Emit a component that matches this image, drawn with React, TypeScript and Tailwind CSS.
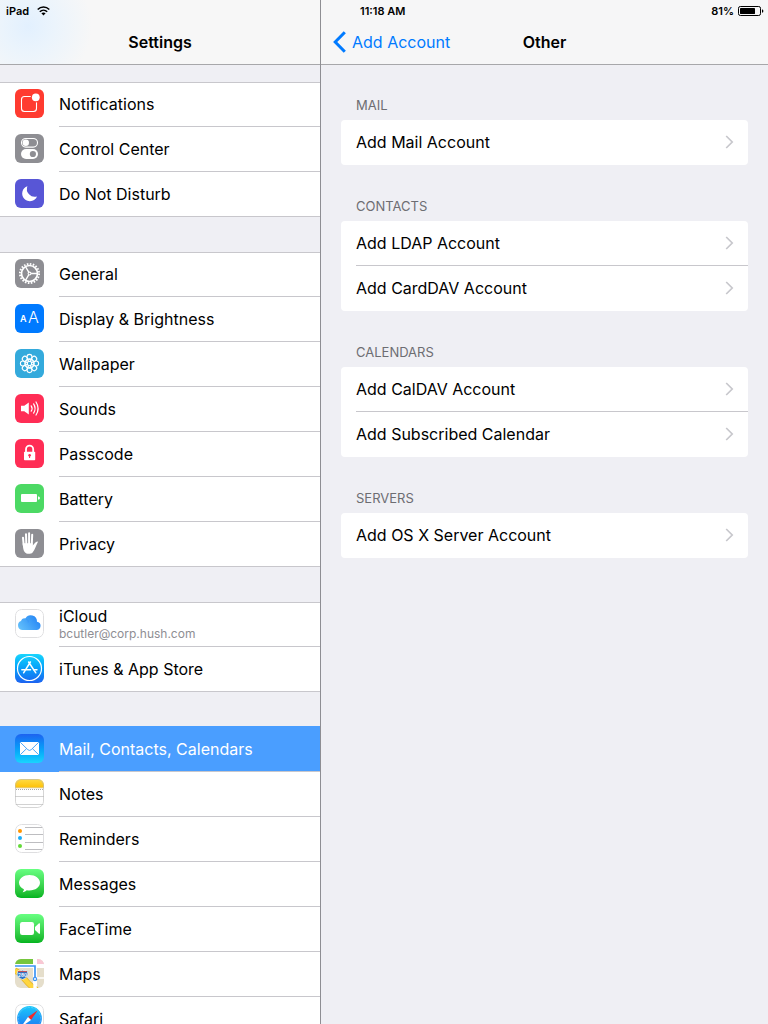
import type { ReactNode } from "react";

function Tile({ children, className }: { children: ReactNode; className: string }) {
  return (
    <svg viewBox="0 0 29 29" aria-hidden="true" className={`size-[29px] shrink-0 rounded-md ${className}`}>
      {children}
    </svg>
  );
}

const NotificationsIcon = () => (
  <Tile className="bg-[#ff3b30]">
    <rect x="6.5" y="7.5" width="15" height="15" rx="3" fill="none" stroke="#fff" strokeWidth="1.1" />
    <circle cx="20.8" cy="8.3" r="5.2" fill="#ff3b30" />
    <circle cx="20.8" cy="8.3" r="3.9" fill="#fff" />
  </Tile>
);

const ControlCenterIcon = () => (
  <Tile className="bg-[#8e8e93]">
    <rect x="6.5" y="4.5" width="16" height="8.6" rx="4.3" fill="none" stroke="#fff" strokeWidth="1.1" />
    <circle cx="10.8" cy="8.8" r="3.2" fill="#fff" />
    <rect x="6" y="15" width="17" height="10" rx="5" fill="#fff" />
    <circle cx="17.9" cy="20" r="3.1" fill="#8e8e93" />
  </Tile>
);

const MoonIcon = () => (
  <Tile className="bg-[#5856d6]">
    <path d="M12.4 7.2A7.7 7.7 0 1 0 22 17.4A7.8 7.8 0 0 1 12.4 7.2Z" fill="#fff" />
  </Tile>
);

const GearIcon = () => (
  <Tile className="bg-[#8e8e93]">
    <g fill="none" stroke="#fff">
      <circle cx="14.5" cy="14.5" r="9.6" strokeWidth="1.9" strokeDasharray="1.6 1.416" />
      <circle cx="14.5" cy="14.5" r="8" strokeWidth="1.7" />
      <circle cx="14.5" cy="14.5" r="1.4" strokeWidth="1.1" />
      <path d="M16 14.5H22M13.7 13.2L10.7 8M13.7 15.8L10.7 21" strokeWidth="1.4" />
    </g>
  </Tile>
);

const DisplayIcon = () => (
  <Tile className="bg-[#007aff]">
    <g fill="#fff" fontFamily="Inter, sans-serif">
      <text x="5" y="18" fontSize="9" fontWeight="600">A</text>
      <text x="13" y="19" fontSize="16" fontWeight="300">A</text>
    </g>
  </Tile>
);

const petals = [0, 45, 90, 135, 180, 225, 270, 315];

const WallpaperIcon = () => (
  <Tile className="bg-[#34aadc]">
    <g fill="none" stroke="#fff" strokeWidth="1.1">
      {petals.map((a) => (
        <g key={a} transform={`rotate(${a} 14.5 14.5)`}>
          <circle cx="14.5" cy="7.9" r="2.5" />
          <circle cx="14.5" cy="11" r="1.5" strokeWidth="0.8" />
        </g>
      ))}
      <circle cx="14.5" cy="14.5" r="2.2" />
    </g>
  </Tile>
);

const SoundsIcon = () => (
  <Tile className="bg-[#ff2d55]">
    <path d="M6 11.8H9.3L13.8 8.5V20.5L9.3 17.2H6Z" fill="#fff" />
    <g fill="none" stroke="#fff" strokeWidth="1.2" strokeLinecap="round">
      <path d="M16.2 11.8Q18 14.5 16.2 17.2" />
      <path d="M18.6 9.9Q21.6 14.5 18.6 19.1" />
      <path d="M21 8Q25.2 14.5 21 21" />
    </g>
  </Tile>
);

const LockIcon = () => (
  <Tile className="bg-[#ff2d55]">
    <path d="M11 13V10.2A3.6 3.6 0 0 1 18.2 10.2V13" fill="none" stroke="#fff" strokeWidth="1.8" />
    <rect x="9" y="12.7" width="11.2" height="8.6" rx="0.8" fill="#fff" />
    <circle cx="14.6" cy="16.2" r="1.3" fill="#ff2d55" />
    <path d="M14.6 16V19" stroke="#ff2d55" strokeWidth="1" />
  </Tile>
);

const BatteryIcon = () => (
  <Tile className="bg-[#4cd964]">
    <rect x="6" y="10" width="16" height="8" rx="1" fill="#fff" />
    <path d="M23 12.2Q25 12.6 25 14T23 15.8Z" fill="#fff" />
  </Tile>
);

const HandIcon = () => (
  <Tile className="bg-[#8e8e93]">
    <g fill="none" stroke="#fff" strokeWidth="2" strokeLinecap="round">
      <path d="M8 8.7L8.7 16M11 5.2L11.3 15M14.1 4.2V15M17.2 5.7L16.8 15" />
    </g>
    <path
      d="M7.7 14.2H17.8V16.6C19.2 14.5 20.5 12.6 22.3 12.4C23 12.4 23 13 22.5 13.8C20.8 16.8 20 20.8 17.6 23.4C15.8 25.4 11.3 25.4 9.6 23C8.1 20.9 7.9 17.2 7.7 14.2Z"
      fill="#fff"
    />
  </Tile>
);

const CloudIcon = () => (
  <Tile className="bg-white">
    <defs>
      <linearGradient id="cloud" x1="0" x2="1" y1="0.8" y2="0.3">
        <stop offset="0" stopColor="#63c0fb" />
        <stop offset="1" stopColor="#2485f5" />
      </linearGradient>
    </defs>
    <rect x="0.5" y="0.5" width="28" height="28" rx="6" fill="none" stroke="#dedee0" />
    <path
      d="M7.6 21A4.6 4.6 0 0 1 6 12.1A3.6 3.6 0 0 1 10.4 9.5A6.2 6.2 0 0 1 22 12.7A4.2 4.2 0 0 1 22 21Z"
      fill="url(#cloud)"
    />
    <path d="M10.4 9.5C12.8 10.2 13.4 12 13.2 13.5" fill="none" stroke="#338ff0" strokeWidth="0.5" />
  </Tile>
);

const AppStoreIcon = () => (
  <Tile className="bg-linear-to-b from-[#1ad5fd] to-[#1d62f0]">
    <g fill="none" stroke="#fff" strokeLinecap="round">
      <circle cx="14.5" cy="14.5" r="12" strokeWidth="1.2" />
      <path d="M13.6 8L20.8 18.8M15.4 8L8.6 18.8" strokeWidth="1.5" />
      <path d="M6.8 15.8H15.6M18.8 15.8H22" strokeWidth="1.4" />
    </g>
  </Tile>
);

const MailIcon = () => (
  <Tile className="bg-linear-to-b from-[#1d62f0] to-[#1ad5fd]">
    <rect x="5" y="8" width="19" height="13" rx="1.2" fill="#fff" />
    <path
      d="M5.4 8.4L12.8 15.7Q14.5 17.2 16.2 15.7L23.6 8.4M5.4 20.6L11.6 14.6M23.6 20.6L17.4 14.6"
      fill="none"
      stroke="#3a9df7"
      strokeWidth="0.9"
    />
  </Tile>
);

const NotesIcon = () => (
  <Tile className="bg-white">
    <defs>
      <linearGradient id="notes" x1="0" x2="0" y1="0" y2="1">
        <stop offset="0" stopColor="#ffdc45" />
        <stop offset="1" stopColor="#fec107" />
      </linearGradient>
    </defs>
    <path d="M0 0H29V8.6H0Z" fill="url(#notes)" />
    <path d="M0 8.8H29" stroke="#c9a227" strokeWidth="0.5" />
    <path d="M1 10.5H28" stroke="#a8a8a8" strokeDasharray="1 1" />
    <path d="M0 17.5H29M0 25.5H29" stroke="#d2d2d2" />
    <rect x="0.5" y="0.5" width="28" height="28" rx="6" fill="none" stroke="#b9b9b9" strokeOpacity="0.6" />
  </Tile>
);

const RemindersIcon = () => (
  <Tile className="bg-white">
    <path d="M10 3.5H28M10 10.5H28M10 18.5H28M10 25.5H27" stroke="#bdbdc0" />
    <circle cx="5" cy="7" r="2" fill="#ff9500" />
    <circle cx="5" cy="14" r="2" fill="#1badf8" />
    <circle cx="5" cy="22" r="2" fill="#63da38" />
    <rect x="0.5" y="0.5" width="28" height="28" rx="6" fill="none" stroke="#dedee0" />
  </Tile>
);

const MessagesIcon = () => (
  <Tile className="bg-linear-to-b from-[#67ff81] to-[#01b41f]">
    <path
      d="M14.5 6C20.3 6 25 9.4 25 13.8S20.3 21.5 14.5 21.5C13.5 21.5 12.6 21.4 11.7 21.2C10.8 22.3 9.3 23.1 7.6 23.2C8.5 22.3 8.9 21.3 8.9 20.3C5.9 18.9 4 16.5 4 13.8C4 9.4 8.7 6 14.5 6Z"
      fill="#fff"
    />
  </Tile>
);

const FaceTimeIcon = () => (
  <Tile className="bg-linear-to-b from-[#67ff81] to-[#01b41f]">
    <rect x="5" y="8" width="14" height="13" rx="2.2" fill="#fff" />
    <path d="M20 13L24 9.3Q25 8.8 25 10V19Q25 20.2 24 19.7L20 16Z" fill="#fff" />
  </Tile>
);

const MapsIcon = () => (
  <Tile className="bg-[#e5decb]">
    <path d="M0 0H18V5H0Z" fill="#76c63e" />
    <path d="M22 0H29V5H22Z" fill="#f9c7d4" />
    <path d="M0 5H29V9H0Z" fill="#fff" />
    <path d="M18 0H22V29H18Z" fill="#fff" />
    <path d="M22 19H29" stroke="#fff" strokeWidth="1.5" />
    <path d="M0 11.5C8 15 11 25.5 22 31" fill="none" stroke="#e2b52c" strokeWidth="6" />
    <path d="M0 11.5C8 15 11 25.5 22 31" fill="none" stroke="#ffd53e" strokeWidth="4.6" />
    <path d="M18.3 22V29H21.7V22Z" fill="#fff" />
    <path d="M0 7H20V18" fill="none" stroke="#3d95f5" strokeWidth="1.7" />
    <circle cx="20" cy="20" r="1.6" fill="#fff" stroke="#3d95f5" strokeWidth="1.2" />
    <path
      d="M3 11.5Q5 12.4 7.5 11.2Q10 12.4 12 11.5Q14 15.5 11.8 18Q10 19.5 7.5 20.5Q5 19.5 3.2 18Q1 15.5 3 11.5Z"
      fill="#2c72c9"
      stroke="#fff"
      strokeWidth="0.6"
    />
    <path d="M3 12.6H12" stroke="#e0483e" strokeWidth="0.9" />
    <text x="7.5" y="17.6" fontSize="4.6" fontWeight="700" textAnchor="middle" fill="#fff" fontFamily="Inter, sans-serif">
      280
    </text>
  </Tile>
);

const SafariIcon = () => (
  <Tile className="bg-white">
    <defs>
      <linearGradient id="compass" x1="0" x2="0" y1="0" y2="1">
        <stop offset="0" stopColor="#1bc8fb" />
        <stop offset="1" stopColor="#1d70f2" />
      </linearGradient>
    </defs>
    <rect x="0.5" y="0.5" width="28" height="28" rx="6" fill="none" stroke="#dedee0" />
    <circle cx="14.5" cy="14.5" r="12.4" fill="url(#compass)" />
    <circle cx="14.5" cy="14.5" r="11.2" fill="none" stroke="#fff" strokeOpacity="0.45" strokeWidth="1.2" strokeDasharray="0.4 1.06" />
    <path d="M22.8 6.2L16 16L13 13Z" fill="#f22b2b" />
    <path d="M6.2 22.8L13 13L16 16Z" fill="#fff" />
  </Tile>
);

type Item = { label: string; Icon: () => ReactNode; detail?: string; selected?: boolean };

const groups: Item[][] = [
  [
    { label: "Notifications", Icon: NotificationsIcon },
    { label: "Control Center", Icon: ControlCenterIcon },
    { label: "Do Not Disturb", Icon: MoonIcon },
  ],
  [
    { label: "General", Icon: GearIcon },
    { label: "Display & Brightness", Icon: DisplayIcon },
    { label: "Wallpaper", Icon: WallpaperIcon },
    { label: "Sounds", Icon: SoundsIcon },
    { label: "Passcode", Icon: LockIcon },
    { label: "Battery", Icon: BatteryIcon },
    { label: "Privacy", Icon: HandIcon },
  ],
  [
    { label: "iCloud", Icon: CloudIcon, detail: "bcutler@corp.hush.com" },
    { label: "iTunes & App Store", Icon: AppStoreIcon },
  ],
  [
    { label: "Mail, Contacts, Calendars", Icon: MailIcon, selected: true },
    { label: "Notes", Icon: NotesIcon },
    { label: "Reminders", Icon: RemindersIcon },
    { label: "Messages", Icon: MessagesIcon },
    { label: "FaceTime", Icon: FaceTimeIcon },
    { label: "Maps", Icon: MapsIcon },
    { label: "Safari", Icon: SafariIcon },
  ],
];

const sections = [
  { title: "Mail", rows: ["Add Mail Account"] },
  { title: "Contacts", rows: ["Add LDAP Account", "Add CardDAV Account"] },
  { title: "Calendars", rows: ["Add CalDAV Account", "Add Subscribed Calendar"] },
  { title: "Servers", rows: ["Add OS X Server Account"] },
];

function SidebarRow({ item, last }: { item: Item; last: boolean }) {
  const { label, Icon, detail, selected } = item;
  return (
    <li className={selected ? "-mt-px bg-[#4a9eff] pt-px text-white" : ""}>
      <a
        href="#"
        aria-current={selected ? "page" : undefined}
        className={`flex h-[45px] items-start ${last ? "border-b border-[#c8c7cc]" : ""}`}
      >
        <span className="px-[15px] pt-[7px]">
          <Icon />
        </span>
        <span className={`flex h-full flex-1 flex-col justify-center ${last ? "" : "border-b border-[#c8c7cc]"}`}>
          <span className={detail ? "leading-5" : "leading-6"}>{label}</span>
          {detail && <span className="text-xs leading-4 text-[#8e8e93]">{detail}</span>}
        </span>
      </a>
    </li>
  );
}

export default function App() {
  return (
    <div className="flex h-screen overflow-hidden bg-[#efeff4] font-['Inter','Liberation_Sans',sans-serif] text-base text-black">
      <aside className="flex w-80 shrink-0 flex-col">
        <header className="flex h-[65px] shrink-0 flex-col border-b border-[#a7a7aa] bg-[#f7f7f7] bg-[radial-gradient(circle_at_28px_26px,#e2f0fe_0px,#ebf4fc_26px,#f7f7f7_64px)]">
          <div className="flex h-[22px] items-center gap-2 px-1.5 text-[11px] font-semibold">
            <span>iPad</span>
            <svg width="13" height="10" viewBox="0 0 13 10" aria-label="Wi-Fi" fill="none" stroke="#000" strokeWidth="1.5">
              <path d="M0.7 3.6C4 0.2 9 0.2 12.3 3.6M2.8 5.7C4.9 3.6 8.1 3.6 10.2 5.7" />
              <path d="M4.4 7.2C5.6 6.1 7.4 6.1 8.6 7.2L6.5 9.4Z" fill="#000" stroke="none" />
            </svg>
          </div>
          <h1 className="pt-2 text-center leading-6 font-semibold">Settings</h1>
        </header>
        <nav aria-label="Settings" className="flex flex-1 flex-col gap-[35px] overflow-y-auto pt-[17px] [scrollbar-width:none]">
          {groups.map((group) => (
            <ul key={group[0].label} className="shrink-0 bg-white shadow-[inset_0_1px_0_#c8c7cc]">
              {group.map((item, i) => (
                <SidebarRow key={item.label} item={item} last={i === group.length - 1} />
              ))}
            </ul>
          ))}
        </nav>
      </aside>

      <main className="flex min-w-0 flex-1 flex-col border-l border-[#8e8e93]">
        <header className="flex h-[65px] shrink-0 flex-col border-b border-[#a7a7aa] bg-[#f6f6f7]">
          <div className="flex h-[22px] items-center justify-between pr-1 pl-[39px] text-[11px] font-semibold">
            <time>11:18 AM</time>
            <span className="flex items-center gap-1">
              81%
              <svg width="26" height="10" viewBox="0 0 26 10" aria-label="Battery">
                <rect x="0.5" y="0.5" width="22" height="9" rx="1.8" fill="none" stroke="#000" />
                <rect x="2" y="2" width="15" height="6" rx="0.4" fill="#000" />
                <path d="M24 3.2Q25.4 3.6 25.4 5T24 6.8Z" fill="#000" />
              </svg>
            </span>
          </div>
          <div className="grid grid-cols-[1fr_auto_1fr] items-center pt-2 leading-6">
            <button type="button" className="flex items-center gap-[6px] pl-3 text-[#007aff]">
              <svg width="13" height="22" viewBox="0 0 13 22" aria-hidden="true" fill="none" stroke="currentColor" strokeWidth="3">
                <path d="M11.8 1.2L2.2 11L11.8 20.8" />
              </svg>
              Add Account
            </button>
            <h2 className="font-semibold">Other</h2>
          </div>
        </header>

        <div className="flex flex-col gap-[31px] overflow-y-auto px-5 pt-[30px] [scrollbar-width:none]">
          {sections.map(({ title, rows }) => (
            <section key={title}>
              <h3 className="h-[25px] pl-[15px] text-[13px] leading-5 text-[#6d6d72] uppercase">{title}</h3>
              <ul className="overflow-hidden rounded bg-white pl-[15px]">
                {rows.map((row) => (
                  <li key={row} className="border-b border-[#c8c7cc] last:border-transparent">
                    <a href="#" className="flex h-11 items-center justify-between pr-[14px]">
                      {row}
                      <svg width="9" height="14" viewBox="0 0 9 14" aria-hidden="true" fill="none" stroke="#c7c7cc" strokeWidth="1.7">
                        <path d="M1.2 1L7.2 7L1.2 13" />
                      </svg>
                    </a>
                  </li>
                ))}
              </ul>
            </section>
          ))}
        </div>
      </main>
    </div>
  );
}
